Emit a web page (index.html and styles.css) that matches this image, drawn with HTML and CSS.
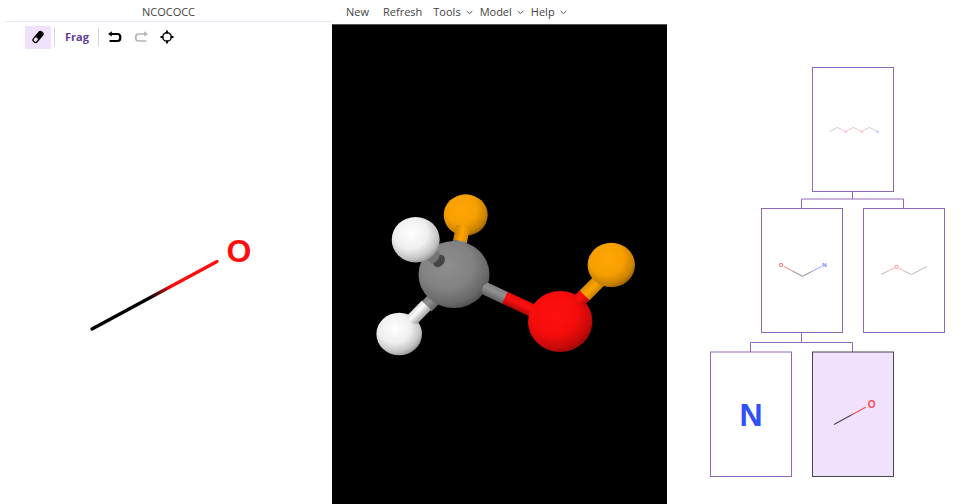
FILE: index.html
```html
<!DOCTYPE html>
<html lang="en">
<head>
<meta charset="utf-8">
<title>NCOCOCC</title>
<link rel="stylesheet" href="styles.css">
</head>
<body>
<main class="workspace">
  <section class="editor">
    <h1 class="editor-title">NCOCOCC</h1>
    <div class="toolbar" role="toolbar" aria-label="Editor tools">
      <div class="tool-group">
        <button class="tool tool-active" type="button" aria-label="Erase">
          <svg class="icon" viewBox="0 0 16 16" aria-hidden="true">
            <g transform="rotate(-49 8 8)">
              <rect x="1.200" y="5" width="13.600" height="6" rx="2.600" fill="#000"/>
              <rect x="2.500" y="6.300" width="4.200" height="3.400" rx="1.300" fill="#f0e1fd"/>
            </g>
          </svg>
        </button>
      </div>
      <div class="tool-group tool-group-frag">
        <button class="tool tool-text" type="button">Frag</button>
      </div>
      <div class="tool-group tool-group-history">
        <button class="tool" type="button" aria-label="Undo">
          <svg class="icon" viewBox="0 0 16 16" aria-hidden="true">
            <path d="M3 5H10.600Q13.300 5 13.300 8.500T10.600 12H2.600" fill="none" stroke="#000" stroke-width="2.200"/>
            <path d="M1 5L4.800 2.200V7.600Z" fill="#000"/>
          </svg>
        </button>
        <button class="tool" type="button" aria-label="Redo" disabled>
          <svg class="icon" viewBox="0 0 16 16" aria-hidden="true">
            <path d="M13 5H5.400Q2.700 5 2.700 8.500T5.400 12H13.400" fill="none" stroke="#b4b4b4" stroke-width="1.700"/>
            <path d="M15 5L11.200 2.200V7.600Z" fill="#b4b4b4"/>
          </svg>
        </button>
        <button class="tool" type="button" aria-label="Center">
          <svg class="icon" viewBox="0 0 16 16" aria-hidden="true">
            <circle cx="8" cy="8" r="4.300" fill="none" stroke="#000" stroke-width="1.400"/>
            <path d="M8 1.500V4.400M8 11.600V14.500M1.500 8H4.400M11.600 8H14.500" stroke="#000" stroke-width="1.800"/>
          </svg>
        </button>
      </div>
    </div>
    <svg class="sketch" viewBox="5 50 327 454" role="img" aria-label="Fragment sketch">
      <defs>
        <linearGradient id="sketch-bond" gradientUnits="userSpaceOnUse" x1="92" y1="329" x2="217" y2="261">
          <stop offset=".46" stop-color="#000"/>
          <stop offset=".64" stop-color="#ff0d0d"/>
        </linearGradient>
      </defs>
      <path d="M92 329L217 261.500" stroke="url(#sketch-bond)" stroke-width="3.300" stroke-linecap="round"/>
      <text class="atom atom-large" x="239" y="261.500" fill="#ff0d0d">O</text>
    </svg>
  </section>

  <section class="viewer">
    <nav class="menu" aria-label="Model menu">
      <button class="menu-item" type="button">New</button>
      <button class="menu-item" type="button">Refresh</button>
      <button class="menu-item menu-drop" type="button" aria-haspopup="true">Tools
        <svg class="chevron" viewBox="0 0 7 5" aria-hidden="true"><path d="M.7 1L3.500 3.600L6.300 1"/></svg></button>
      <button class="menu-item menu-drop" type="button" aria-haspopup="true">Model
        <svg class="chevron" viewBox="0 0 7 5" aria-hidden="true"><path d="M.7 1L3.500 3.600L6.300 1"/></svg></button>
      <button class="menu-item menu-drop" type="button" aria-haspopup="true">Help
        <svg class="chevron" viewBox="0 0 7 5" aria-hidden="true"><path d="M.7 1L3.500 3.600L6.300 1"/></svg></button>
    </nav>
    <svg class="scene" viewBox="332 25 335 479" role="img" aria-label="Ball and stick model">
      <defs>
        <radialGradient id="white-ball" cx=".4" cy=".36" r=".7">
          <stop offset="0" stop-color="#fff"/><stop offset=".5" stop-color="#efefef"/>
          <stop offset=".8" stop-color="#c4c4c4"/><stop offset="1" stop-color="#888"/>
        </radialGradient>
        <radialGradient id="gray-ball" cx=".4" cy=".36" r=".72">
          <stop offset="0" stop-color="#8e8e8e"/><stop offset=".5" stop-color="#828282"/>
          <stop offset=".8" stop-color="#686868"/><stop offset="1" stop-color="#444"/>
        </radialGradient>
        <radialGradient id="red-ball" cx=".4" cy=".36" r=".72">
          <stop offset="0" stop-color="#ff1010"/><stop offset=".5" stop-color="#f60c0c"/>
          <stop offset=".8" stop-color="#c60909"/><stop offset="1" stop-color="#800505"/>
        </radialGradient>
        <radialGradient id="orange-ball" cx=".4" cy=".36" r=".72">
          <stop offset="0" stop-color="#ffa605"/><stop offset=".5" stop-color="#f79f00"/>
          <stop offset=".8" stop-color="#c88100"/><stop offset="1" stop-color="#805200"/>
        </radialGradient>
        <linearGradient id="white-rod" x2="0" y2="1">
          <stop offset="0" stop-color="#d8d8d8"/><stop offset=".35" stop-color="#fff"/><stop offset="1" stop-color="#a0a0a0"/>
        </linearGradient>
        <linearGradient id="gray-rod" x2="0" y2="1">
          <stop offset="0" stop-color="#808080"/><stop offset=".4" stop-color="#929292"/><stop offset="1" stop-color="#606060"/>
        </linearGradient>
        <linearGradient id="red-rod" x2="0" y2="1">
          <stop offset="0" stop-color="#e40b0b"/><stop offset=".4" stop-color="#ff1010"/><stop offset="1" stop-color="#b00808"/>
        </linearGradient>
        <linearGradient id="orange-rod" x2="0" y2="1">
          <stop offset="0" stop-color="#d88b00"/><stop offset=".5" stop-color="#ffa500"/><stop offset="1" stop-color="#c88000"/>
        </linearGradient>
      </defs>
      <ellipse cx="465.700" cy="215" rx="22" ry="20.700" fill="url(#orange-ball)"/>
      <g transform="translate(463 226) rotate(101)">
        <path d="M1 -7Q-3 0 1 7H18V-7Z" fill="url(#orange-rod)"/>
        <rect x="15" y="-7" width="7" height="14" fill="url(#gray-rod)"/>
      </g>
      <g transform="translate(411 322) rotate(-45)">
        <rect x="22" y="-7" width="18" height="14" fill="url(#gray-rod)"/>
      </g>
      <ellipse cx="454" cy="274.500" rx="35.500" ry="33.500" fill="url(#gray-ball)"/>
      <g transform="translate(429 253) rotate(38)">
        <rect x="-4" y="-6.500" width="17" height="13" fill="#747474"/>
        <ellipse cx="13" cy="0" rx="5" ry="6.700" fill="#454545"/>
        <path d="M-4 -6.500H9Q13 0 9 6.500H-4Z" fill="#747474"/>
      </g>
      <ellipse cx="415.700" cy="239.700" rx="24" ry="22.800" fill="url(#white-ball)"/>
      <ellipse cx="399.200" cy="334" rx="22.800" ry="21.300" fill="url(#white-ball)"/>
      <g transform="translate(411 321) rotate(-46)">
        <path d="M2 -6.500Q-4 0 2 6.500H22V-6.500Z" fill="url(#white-rod)"/>
      </g>
      <g transform="translate(484 288) rotate(25)">
        <path d="M1 -6.500Q-4 0 1 6.500H24V-6.500Z" fill="url(#gray-rod)"/>
        <rect x="23" y="-6.500" width="35" height="13" fill="url(#red-rod)"/>
      </g>
      <ellipse cx="560.200" cy="321.500" rx="32.200" ry="30.500" fill="url(#red-ball)"/>
      <g transform="translate(579 301) rotate(-45)">
        <path d="M1 -7Q-3 0 1 7H9V-7Z" fill="url(#red-rod)"/>
        <rect x="8" y="-7" width="24" height="14" fill="url(#orange-rod)"/>
      </g>
      <ellipse cx="611.300" cy="265" rx="23.700" ry="22.300" fill="url(#orange-ball)"/>
    </svg>
  </section>

  <section class="hierarchy">
    <svg class="tree" viewBox="667 0 310 504" role="img" aria-label="Fragment tree">
      <defs>
        <linearGradient id="node-bond" gradientUnits="userSpaceOnUse" x1="834" y1="425" x2="866" y2="407">
          <stop offset=".5" stop-color="#4b434f"/><stop offset=".65" stop-color="#f9525c"/>
        </linearGradient>
        <linearGradient id="left-bond" gradientUnits="userSpaceOnUse" x1="784" y1="266" x2="802" y2="276">
          <stop offset=".35" stop-color="#ff8686"/><stop offset=".65" stop-color="#858585"/>
        </linearGradient>
        <linearGradient id="right-bond" gradientUnits="userSpaceOnUse" x1="802" y1="276" x2="821" y2="266">
          <stop offset=".35" stop-color="#858585"/><stop offset=".65" stop-color="#95a5fb"/>
        </linearGradient>
      </defs>
      <g class="links">
        <path d="M852.500 192V199M801.500 208V199H903.500V208"/>
        <path d="M801.500 333V342.500M750.500 352V342.500H852.500V352"/>
      </g>
      <g class="nodes">
        <rect x="812.500" y="67.500" width="81" height="124"/>
        <rect x="761.500" y="208.500" width="81" height="124"/>
        <rect x="863.500" y="208.500" width="81" height="124"/>
        <rect x="710.500" y="352" width="81" height="124.500"/>
        <rect class="node-selected" x="812.500" y="352" width="81" height="124.500"/>
      </g>
      <g class="bonds">
        <path d="M829.500 131.500L837.500 127.500L841.500 129.500M849 129.500L853.500 127.500L857.500 129.500M865 129.500L869.500 127.500L873.500 129.500" stroke="#d0d0d0"/>
        <path d="M841.500 129.500L845.500 131.700L849 129.500M857.500 129.500L861.500 131.700L865 129.500" stroke="#ffc4c4"/>
        <path d="M873.500 129.500L878 132" stroke="#c4cdff"/>
        <circle cx="845.500" cy="131.800" r="1" fill="#ffb0b0"/>
        <circle cx="861.500" cy="131.800" r="1" fill="#ffb0b0"/>
        <circle cx="877.700" cy="131.800" r="1" fill="#a8b6ff"/>
        <path d="M784 266.500L802.500 276.300" stroke="url(#left-bond)"/>
        <path d="M802.500 276.300L821.500 266.500" stroke="url(#right-bond)"/>
        <path d="M881 274.500L888 271M904 271L911.500 274.500L927 266.500" stroke="#b8b8b8"/>
        <path d="M888 271L894 268M899 268.500L904 271" stroke="#ffb0b0"/>
        <path d="M834 424.500L866 407" stroke="url(#node-bond)" stroke-width="1.200"/>
      </g>
      <text class="atom atom-tiny" x="781" y="267" fill="#ff6060">O</text>
      <text class="atom atom-tiny" x="824.500" y="267" fill="#6f86fa">N</text>
      <text class="atom atom-tiny" x="896.500" y="268.500" fill="#ff8f8f">O</text>
      <text class="atom atom-large" x="751" y="426" fill="#3050f8">N</text>
      <text class="atom atom-small" x="871.700" y="408" fill="#fb4650">O</text>
    </svg>
  </section>
</main>
</body>
</html>
```

FILE: styles.css
```css
* {
  box-sizing: border-box;
}

body {
  margin: 0;
  background: #fff;
  color: #444;
  font: 11px/16px "Open Sans", "Noto Sans", sans-serif;
}

button {
  margin: 0;
  border: 0;
  background: none;
  color: inherit;
  font: inherit;
  cursor: pointer;
}

svg {
  display: block;
}

.workspace {
  display: grid;
  grid-template-columns: 332fr 335fr 310fr;
  min-height: 100vh;
}

.editor,
.viewer,
.hierarchy {
  display: flex;
  flex-direction: column;
  min-width: 0;
}

.editor {
  padding-left: 5px;
}

.editor-title {
  margin: 0;
  padding: 4px 0 1px;
  border-bottom: 1px solid #ebe7fa;
  font-size: 11px;
  font-weight: 400;
  text-align: center;
}

.toolbar {
  display: flex;
  align-items: center;
  height: 28px;
  padding: 2px 20px 0;
}

.tool-group {
  display: flex;
  align-items: center;
  height: 18px;
}

.tool-group-frag {
  margin-left: 3px;
  padding: 0 9px 0 10px;
  border: solid #d6d6d6;
  border-width: 0 1px;
}

.tool-group-history {
  gap: 2px;
  padding-left: 4px;
}

.tool {
  display: grid;
  place-items: center;
  width: 24px;
  height: 23px;
  padding: 0;
}

.tool-active {
  width: 26px;
  background: #f0e1fd;
}

.tool-text {
  width: auto;
  color: #643c96;
  font-weight: 700;
}

.icon {
  width: 16px;
  height: 16px;
}

.sketch,
.scene {
  flex: 1;
  width: 100%;
  min-height: 0;
}

.scene {
  background: #000;
}

.menu {
  display: flex;
  height: 25px;
  padding: 0 7px;
  border-bottom: 1px solid #555;
}

.menu-item {
  padding: 0 7px;
}

.menu-drop {
  display: flex;
  align-items: center;
  gap: 5px;
  padding: 0 3px 0 4px;
}

.chevron {
  width: 7px;
  height: 5px;
  fill: none;
  stroke: #555;
}

.tree {
  width: 100%;
  height: 100vh;
}

.links,
.nodes {
  fill: none;
  stroke: #9068b8;
}

.nodes .node-selected {
  fill: #f0e1fd;
  stroke: #4b434f;
}

.bonds {
  fill: none;
}

.atom {
  font-family: "Liberation Sans", Arial, sans-serif;
  font-weight: 700;
  text-anchor: middle;
}

.atom-large {
  font-size: 32px;
}

.atom-small {
  font-size: 10px;
}

.atom-tiny {
  font-size: 6px;
}
```
